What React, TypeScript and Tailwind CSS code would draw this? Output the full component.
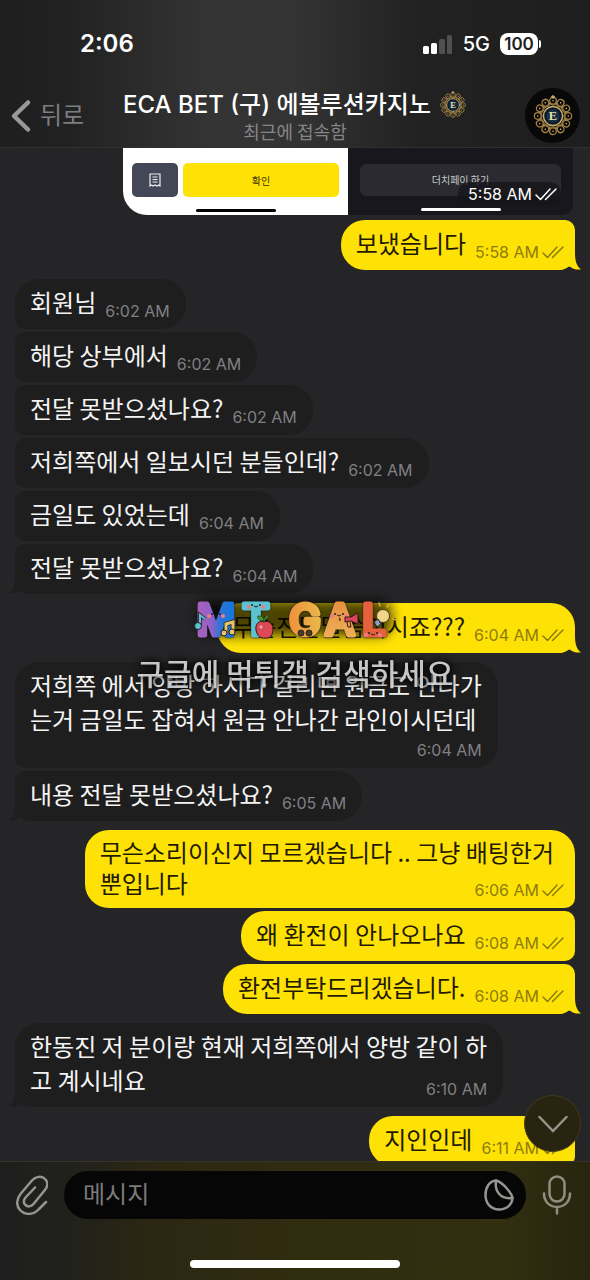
type Message = {
  from: "me" | "them";
  lines: string[];
  time: string;
  first?: boolean;
  last?: boolean;
  timeBelow?: boolean;
};

const messages: Message[] = [
  { from: "me", lines: ["보냈습니다"], time: "5:58 AM", last: true },
  { from: "them", lines: ["회원님"], time: "6:02 AM", first: true },
  { from: "them", lines: ["해당 상부에서"], time: "6:02 AM" },
  { from: "them", lines: ["전달 못받으셨나요?"], time: "6:02 AM" },
  { from: "them", lines: ["저희쪽에서 일보시던 분들인데?"], time: "6:02 AM" },
  { from: "them", lines: ["금일도 있었는데"], time: "6:04 AM" },
  { from: "them", lines: ["전달 못받으셨나요?"], time: "6:04 AM", last: true },
  {
    from: "me",
    lines: ["무슨전달말씀이시죠???"],
    time: "6:04 AM",
    first: true,
    last: true,
  },
  {
    from: "them",
    lines: [
      "저희쪽 에서 양방 하시다 걸리면 원금도 안나가",
      "는거 금일도 잡혀서 원금 안나간 라인이시던데",
    ],
    time: "6:04 AM",
    first: true,
    timeBelow: true,
  },
  { from: "them", lines: ["내용 전달 못받으셨나요?"], time: "6:05 AM", last: true },
  {
    from: "me",
    lines: ["무슨소리이신지 모르겠습니다 .. 그냥 배팅한거", "뿐입니다"],
    time: "6:06 AM",
    first: true,
  },
  { from: "me", lines: ["왜 환전이 안나오나요"], time: "6:08 AM" },
  { from: "me", lines: ["환전부탁드리겠습니다."], time: "6:08 AM", last: true },
  {
    from: "them",
    lines: ["한동진 저 분이랑 현재 저희쪽에서 양방 같이 하", "고 계시네요"],
    time: "6:10 AM",
    first: true,
    last: true,
  },
  { from: "me", lines: ["지인인데"], time: "6:11 AM", first: true },
];

function Ticks() {
  return (
    <svg width="22" height="14" viewBox="0 0 22 14" fill="none" className="shrink-0">
      <path
        d="M1 8L5.500 12.500L15 2M10.500 12.500L21 2"
        stroke="currentColor"
        strokeWidth="1.500"
        strokeLinecap="round"
        strokeLinejoin="round"
      />
    </svg>
  );
}

function Tail({ mine }: { mine: boolean }) {
  return (
    <svg
      width="24"
      height="18"
      viewBox="0 0 24 18"
      className={
        mine
          ? "absolute bottom-0 -right-[6px] text-[#ffe205]"
          : "absolute bottom-0 -left-[6px] -scale-x-100 text-[#1e1e1f]"
      }
    >
      <path
        d="M0 0H18C18 8 19 13.500 24 17.500C19 18 15 16.500 12 14.200C9 16.500 5 18 0 18Z"
        fill="currentColor"
      />
    </svg>
  );
}

function Bubble({ message }: { message: Message }) {
  const mine = message.from === "me";
  const head = message.lines.slice(0, -1);
  const tail = message.lines[message.lines.length - 1];

  const shape = mine
    ? `rounded-l-[24px] ${message.first ? "rounded-tr-[24px]" : "rounded-tr-[10px]"} ${
        message.last ? "rounded-br-[16px]" : "rounded-br-[10px]"
      }`
    : `rounded-r-[24px] ${message.first ? "rounded-tl-[24px]" : "rounded-tl-[10px]"} ${
        message.last ? "rounded-bl-[16px]" : "rounded-bl-[10px]"
      }`;
  const tone = mine
    ? "bg-[#ffe205] text-[#1f1a00] pl-[15px] pr-[11px]"
    : "bg-[#1e1e1f] text-[#f4f4f4] pl-[15px] pr-4";
  const leading = mine && head.length > 0 ? "leading-[31px]" : "leading-[34px]";

  const time = (
    <span
      className={`flex items-center gap-[3px] font-['Inter','Noto_Sans_CJK_KR',sans-serif] text-[16px] leading-4 ${
        mine ? "text-[#8c7d0a]" : "text-[#808082]"
      }`}
    >
      <time>{message.time}</time>
      {mine && <Ticks />}
    </span>
  );

  return (
    <li
      className={`relative w-fit whitespace-nowrap pt-1.5 pb-2.5 text-[24px] ${tone} ${shape} ${leading} ${
        mine ? "self-end" : "self-start"
      } ${message.first ? "mt-[9px]" : "mt-[3px]"}`}
    >
      {message.last && <Tail mine={mine} />}
      <div className="relative">
        {head.map((line) => (
          <p key={line} className={mine ? "pr-2.5" : ""}>
            {line}
          </p>
        ))}
        {message.timeBelow ? (
          <>
            <p>{tail}</p>
            <div className="mt-1.5 flex justify-end">{time}</div>
          </>
        ) : (
          <div className="flex items-end justify-between gap-[9px]">
            <p>{tail}</p>
            {time}
          </div>
        )}
      </div>
    </li>
  );
}

const petals = [0, 30, 60, 90, 120, 150, 180, 210, 240, 270, 300, 330];

function Emblem({ size }: { size: number }) {
  return (
    <svg width={size} height={size} viewBox="0 0 44 44" fill="none">
      {petals.map((angle) => (
        <g key={angle} transform={`rotate(${angle} 22 22)`} stroke="#a98545">
          <circle cx="22" cy="6" r="3.500" strokeWidth="1.300" />
          <path d="M17.500 8.500C19 11 25 11 26.500 8.500" strokeWidth="1.300" />
          <circle cx="22" cy="6" r="0.800" fill="#d9bd78" stroke="none" />
        </g>
      ))}
      <path d="M22 0V4M20 2H24" stroke="#d9bd78" strokeWidth="1.200" />
      <circle cx="22" cy="22" r="12.500" stroke="#6e5527" strokeWidth="1" strokeDasharray="2 1" />
      <circle cx="22" cy="22" r="10" fill="#0c1722" stroke="#c9b27a" strokeWidth="1.500" />
      <circle cx="22" cy="22" r="7" fill="#153049" />
      <text
        x="22"
        y="26.500"
        textAnchor="middle"
        fontFamily="Liberation Serif, serif"
        fontWeight="700"
        fontSize="13"
        fill="#e8dfa6"
      >
        E
      </text>
    </svg>
  );
}

function StatusBar() {
  return (
    <div className="flex h-[88px] items-center justify-between pr-[49px] pl-20 font-['Inter',sans-serif] text-white">
      <time className="text-[24px] leading-7 font-semibold">2:06</time>
      <div className="flex items-center gap-2.5">
        <svg width="31" height="19" viewBox="0 0 31 19">
          <rect x="1" y="11" width="6" height="8" rx="1.500" fill="#fff" />
          <rect x="9" y="8" width="6" height="11" rx="1.500" fill="#fff" />
          <rect x="17" y="4" width="6" height="15" rx="1.500" fill="#505050" />
          <rect x="25" y="0" width="5" height="19" rx="1.500" fill="#505050" />
        </svg>
        <span className="text-[20px] leading-6 font-medium">5G</span>
        <div className="flex items-center gap-px">
          <span className="flex h-[22px] w-[38px] items-center justify-center rounded-[8px] bg-white text-[17px] leading-[22px] font-semibold text-[#1e1e1e]">
            100
          </span>
          <span className="h-2 w-0.5 rounded-r-full bg-white" />
        </div>
      </div>
    </div>
  );
}

function ChatHeader() {
  return (
    <header className="shrink-0 border-b border-[#303033] bg-[linear-gradient(90deg,#1e1e1e_0%,#222222_12%,#343434_36%,#333333_50%,#222223_70%,#1e1e1f_100%)]">
      <StatusBar />
      <div className="grid h-[59px] grid-cols-[1fr_auto_1fr] items-center px-2.5 pb-2">
        <a href="#chats" className="flex items-center gap-2 text-[24px] leading-8 text-[#7e7e80]">
          <svg width="22" height="34" viewBox="0 0 22 34" fill="none">
            <path
              d="M18 3.500L4 17L18 30.500"
              stroke="#98989a"
              strokeWidth="4.500"
              strokeLinecap="round"
              strokeLinejoin="round"
            />
          </svg>
          <span className="pb-1">뒤로</span>
        </a>
        <div className="flex flex-col items-center">
          <h1 className="flex items-center gap-2 font-['Inter','Noto_Sans_CJK_KR',sans-serif] text-[24px] leading-[30px] font-medium text-white">
            ECA BET (구) 에볼루션카지노
            <Emblem size={28} />
          </h1>
          <p className="text-[18px] leading-[22px] text-[#858587]">최근에 접속함</p>
        </div>
        <div className="flex justify-end">
          <button
            type="button"
            aria-label="프로필"
            className="flex size-[55px] items-center justify-center rounded-full bg-[#080808]"
          >
            <Emblem size={42} />
          </button>
        </div>
      </div>
    </header>
  );
}

function SharedPhoto() {
  return (
    <li className="relative mr-0.5 mb-0.5 grid h-[67px] w-[450px] grid-cols-2 self-end overflow-hidden rounded-br-[10px] rounded-bl-[24px] text-[10px]">
      <div className="flex flex-col items-center justify-between bg-white px-[9px] pt-[15px] pb-[3px]">
        <div className="flex w-full gap-[5px]">
          <span className="flex h-[34px] w-[46px] items-center justify-center rounded-[5px] bg-[#434757]">
            <svg width="12" height="14" viewBox="0 0 12 14" fill="none" stroke="#eee" strokeWidth="1.200">
              <path d="M1 1H11V13L9.500 12L8 13L6 12L4 13L2.500 12L1 13Z" />
              <path d="M3.500 4H8.500M3.500 6.500H8.500M3.500 9H8.500" />
            </svg>
          </span>
          <span className="flex h-[34px] flex-1 items-center justify-center rounded-[5px] bg-[#ffe205] text-[#3a3000]">
            확인
          </span>
        </div>
        <span className="h-[3px] w-20 rounded-full bg-black" />
      </div>
      <div className="flex flex-col items-center justify-between bg-[#17171d] px-3 pt-4 pb-1">
        <span className="flex h-8 w-full items-center justify-center rounded-[6px] bg-[#2a2a30] pb-0.5 text-[#c8c8cc]">
          더치페이 하기
        </span>
        <span className="h-[3px] w-20 rounded-full bg-white" />
      </div>
      <span className="absolute right-3 bottom-[9px] flex h-6 items-center gap-[3px] rounded-full bg-[#16161a]/80 pr-1 pl-2.5 font-['Inter',sans-serif] text-[16px] text-white">
        <time>5:58 AM</time>
        <Ticks />
      </span>
    </li>
  );
}

function Composer() {
  return (
    <footer className="shrink-0 border-t border-[#333326] bg-[linear-gradient(90deg,#1e1e1e_0%,#21211c_12%,#2c2713_26%,#302c10_50%,#322e10_85%,#28250f_100%)]">
      <form className="flex items-center gap-4 pt-[9px] pr-[18px] pl-4">
        <button type="button" aria-label="첨부" className="text-[#949490]">
          <svg width="32" height="40" viewBox="0 0 32 40" fill="none">
            <path
              d="M30 27L22.500 34.500C17 40.500 8.500 40 4 35C-0.500 30 1 23.500 4.500 19L15.500 6C20 1 26 0.500 29.500 4.500C32.500 8 31.500 12 28.500 15.500L17.500 29C15 32 11.500 32 9.500 30C7.500 28 7.500 25 9.500 22.500L19 12.500"
              stroke="currentColor"
              strokeWidth="2.500"
              strokeLinecap="round"
              strokeLinejoin="round"
            />
          </svg>
        </button>
        <div className="flex h-12 min-w-0 flex-1 items-center rounded-full bg-[#060606] pr-3 pl-[19px]">
          <input
            type="text"
            aria-label="메시지"
            placeholder="메시지"
            className="min-w-0 flex-1 bg-transparent pb-1 text-[24px] leading-8 text-white outline-none placeholder:text-[#7b7b7b]"
          />
          <button type="button" aria-label="스티커" className="text-[#949490]">
            <svg width="30" height="32" viewBox="0 0 30 32" fill="none" stroke="currentColor" strokeWidth="2.500">
              <path
                d="M12 1.500C5.500 2 1.500 8 1.500 16C1.500 24.500 7 30.500 15 30.500C22.500 30.500 28 26 28.500 19C28 15 19.500 3.500 12 1.500Z"
                strokeLinejoin="round"
              />
              <path d="M12 1.500C10.500 12 16 20.500 28.500 19" strokeLinecap="round" />
            </svg>
          </button>
        </div>
        <button type="button" aria-label="음성 메시지" className="text-[#8f8e80]">
          <svg
            width="30"
            height="40"
            viewBox="0 0 30 40"
            fill="none"
            stroke="currentColor"
            strokeWidth="2.500"
            strokeLinecap="round"
          >
            <rect x="7.500" y="1.500" width="15" height="25" rx="7.500" />
            <path d="M2 18.500C2 26.500 7.500 32 15 32C22.500 32 28 26.500 28 18.500M15 32V38.500" />
          </svg>
        </button>
      </form>
      <div className="flex justify-center pt-[41px] pb-3">
        <span className="h-2 w-[210px] rounded-full bg-white" />
      </div>
    </footer>
  );
}

const letters = [
  { char: "M", x: 26, fill: "url(#violet)" },
  { char: "T", x: 66, fill: "#5cc3d3" },
  { char: "G", x: 115, fill: "url(#amber)" },
  { char: "A", x: 150, fill: "url(#peach)" },
  { char: "L", x: 184, fill: "#e5603c" },
];

const faces = [
  [26, 24],
  [66, 15],
  [149, 24],
  [183, 43],
];

function Watermark() {
  return (
    <div className="pointer-events-none fixed inset-0 flex flex-col items-center justify-center">
      <svg width="230" height="64" viewBox="-10 0 230 64" className="overflow-visible">
        <defs>
          <linearGradient id="violet">
            <stop offset="0.100" stopColor="#a95fc0" />
            <stop offset="0.400" stopColor="#8a63c8" />
            <stop offset="0.600" stopColor="#2f74d6" />
            <stop offset="0.900" stopColor="#1976dc" />
          </linearGradient>
          <linearGradient id="amber">
            <stop offset="0" stopColor="#f0913c" />
            <stop offset="1" stopColor="#e8b84a" />
          </linearGradient>
          <linearGradient id="peach" x2="0" y2="1">
            <stop offset="0" stopColor="#e58a3c" />
            <stop offset="1" stopColor="#f0b55e" />
          </linearGradient>
          <filter id="glow" x="-20%" y="-50%" width="140%" height="200%">
            <feGaussianBlur stdDeviation="6" />
          </filter>
        </defs>
        <rect x="8" y="10" width="194" height="36" rx="12" fill="#000" opacity="0.700" filter="url(#glow)" />
        <g
          fontFamily="Inter, sans-serif"
          fontWeight="500"
          fontSize="42"
          textAnchor="middle"
          strokeWidth="5"
          strokeLinejoin="round"
          className="drop-shadow-[0_0_1px_#1a1410]"
        >
          {letters.map((letter) => (
            <text key={letter.char} x={letter.x} y="45" fill={letter.fill} stroke={letter.fill}>
              {letter.char}
            </text>
          ))}
        </g>
        {faces.map(([x, y]) => (
          <g key={x}>
            <circle cx={x - 4} cy={y} r="1" fill="#222" />
            <circle cx={x + 4} cy={y} r="1" fill="#222" />
            <circle cx={x - 7} cy={y + 2} r="2" fill="#f07a8a" />
            <circle cx={x + 7} cy={y + 2} r="2" fill="#f07a8a" />
            <path d={`M${x - 2} ${y + 1}q2 2 4 0`} stroke="#222" fill="none" />
          </g>
        ))}
        <path d="M10 36V25L15 29" stroke="#222" strokeWidth="3.500" fill="none" />
        <path d="M10 36V25L15 29" stroke="#5cc3d3" strokeWidth="2" fill="none" />
        <circle cx="8" cy="36" r="3.500" fill="#5cc3d3" stroke="#222" />
        <path d="M36 43V34L43 32V42" stroke="#222" strokeWidth="4.500" fill="none" />
        <path d="M36 43V34L43 32V42" stroke="#e6c26a" strokeWidth="3" fill="none" />
        <circle cx="34" cy="43" r="3" fill="#e6c26a" stroke="#222" />
        <circle cx="42" cy="42" r="3" fill="#e6c26a" stroke="#222" />
        <path
          d="M74 32C69 30 65 34 66 40C67 46 71 49 75 48C80 49 83 45 83 39C83 33 78 30 74 32Z"
          fill="#dc4a55"
          stroke="#3a1418"
        />
        <path d="M74 32C73 28 76 26 79 25M74 31C69 31 67 28 68 26C72 26 74 28 74 31Z" fill="#4c9a3c" stroke="#28531f" />
        <circle cx="71" cy="37" r="1.500" fill="#f6b3b5" />
        <circle cx="111" cy="43" r="3" fill="#4d3b25" stroke="#222" />
        <circle cx="119" cy="43" r="3" fill="#4d3b25" stroke="#222" />
        <path d="M155 27L161 27L168 23V34L161 31L155 32Z" fill="#d5465a" stroke="#3a1418" />
        <path d="M157 32L158 37H161L160 32" fill="#e9a45a" stroke="#3a1418" />
        <circle cx="193" cy="26" r="6.500" fill="#f1d58a" stroke="#4a3a18" />
        <path d="M184 32L188 29L191 34L187 37Z" fill="#8f9fc4" stroke="#222" />
        <path
          d="M190 16L189 13M197 17L199 14M202 22L205 20M203 29L206 30"
          stroke="#d8a93c"
          strokeWidth="1.500"
          strokeLinecap="round"
        />
      </svg>
      <p className="text-[30px] leading-9 font-medium text-[#dadada]/90 [text-shadow:0_0_10px_#000,0_0_6px_#000]">
        구글에 먹튀갤 검색하세요
      </p>
    </div>
  );
}

export default function App() {
  return (
    <div className="flex h-screen flex-col overflow-hidden bg-[#252527] font-['Noto_Sans_CJK_KR','Inter',sans-serif]">
      <ChatHeader />
      <main className="relative min-h-0 flex-1 overflow-hidden">
        <ul className="flex flex-col px-[15px]">
          <SharedPhoto />
          {messages.map((message, index) => (
            <Bubble key={index} message={message} />
          ))}
        </ul>
        <button
          type="button"
          aria-label="맨 아래로"
          className="absolute right-[9px] bottom-[9px] flex size-[57px] items-center justify-center rounded-full border border-[#3d3a1c] bg-[#28240f]"
        >
          <svg width="30" height="18" viewBox="0 0 30 18" fill="none">
            <path d="M1.500 2L15 16L28.500 2" stroke="#96958c" strokeWidth="2.500" strokeLinecap="round" />
          </svg>
        </button>
      </main>
      <Composer />
      <Watermark />
    </div>
  );
}
